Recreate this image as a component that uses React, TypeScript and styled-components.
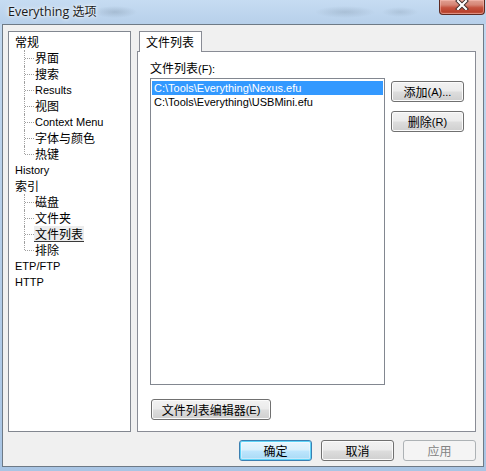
import React from 'react'
import styled, { createGlobalStyle, css } from 'styled-components'

const GlobalStyle = createGlobalStyle`
  html, body {
    margin: 0;
    padding: 0;
    background: #b9d1ea;
  }
  body {
    font-family: 'Liberation Sans', 'Noto Sans CJK SC', sans-serif;
  }
  * {
    box-sizing: border-box;
  }
`

const treeItems = [
  { label: '常规', level: 0 },
  { label: '界面', level: 1 },
  { label: '搜索', level: 1 },
  { label: 'Results', level: 1 },
  { label: '视图', level: 1 },
  { label: 'Context Menu', level: 1 },
  { label: '字体与颜色', level: 1 },
  { label: '热键', level: 1, last: true },
  { label: 'History', level: 0 },
  { label: '索引', level: 0 },
  { label: '磁盘', level: 1 },
  { label: '文件夹', level: 1 },
  { label: '文件列表', level: 1, selected: true },
  { label: '排除', level: 1, last: true },
  { label: 'ETP/FTP', level: 0 },
  { label: 'HTTP', level: 0 },
]

const files = ['C:\\Tools\\Everything\\Nexus.efu', 'C:\\Tools\\Everything\\USBMini.efu']

const isCjk = (s: string) => /[\u4e00-\u9fff]/.test(s)

const App = () => {
  return (
    <>
      <GlobalStyle />
      <Window>
        <TitleBar>
          <Title>
            Everything <Cjk>选项</Cjk>
          </Title>
          <CloseButton>
            <svg width="14" height="10" viewBox="0 0 14 10">
              <path d="M3 1 L11 9 M11 1 L3 9" stroke="#3a2a28" strokeWidth="4" strokeLinecap="square" />
              <path d="M3 1 L11 9 M11 1 L3 9" stroke="#ffffff" strokeWidth="2.2" strokeLinecap="square" />
            </svg>
          </CloseButton>
        </TitleBar>
        <Client>
          <MainRow>
            <Tree>
              {treeItems.map((item, i) => (
                <TreeRow key={i} $level={item.level} $last={!!item.last}>
                  <TreeLabel $cjk={isCjk(item.label)} $selected={!!item.selected}>
                    {item.label}
                  </TreeLabel>
                </TreeRow>
              ))}
            </Tree>
            <TabArea>
              <TabStrip>
                <Tab>文件列表</Tab>
              </TabStrip>
              <TabPanel>
                <FieldLabel>
                  文件列表<Latin>(F):</Latin>
                </FieldLabel>
                <ListRow>
                  <ListBox>
                    {files.map((f, i) => (
                      <ListItem key={f} $selected={i === 0}>
                        {f}
                      </ListItem>
                    ))}
                  </ListBox>
                  <SideButtons>
                    <Button>
                      添加<Latin>(A)...</Latin>
                    </Button>
                    <Button>
                      删除<Latin>(R)</Latin>
                    </Button>
                  </SideButtons>
                </ListRow>
                <EditorButton>
                  文件列表编辑器<Latin>(E)</Latin>
                </EditorButton>
              </TabPanel>
            </TabArea>
          </MainRow>
          <ButtonRow>
            <Button $variant="default">确定</Button>
            <Button>取消</Button>
            <Button $variant="disabled">应用</Button>
          </ButtonRow>
        </Client>
      </Window>
    </>
  )
}

const Window = styled.div`
  width: 486px;
  height: 471px;
  display: flex;
  flex-direction: column;
  padding: 0 2px 4px 2px;
  background: linear-gradient(to bottom, #c3d9f0 0%, #b8d0ea 40%, #a9c5e4 100%);
`
const TitleBar = styled.div`
  height: 24px;
  display: flex;
  align-items: flex-start;
  padding-left: 3px;
  margin: 0 -2px 0 -2px;
  padding-right: 1px;
  background:
    radial-gradient(ellipse 22px 6px at 115px 12px, rgba(120, 140, 160, 0.35), transparent),
    radial-gradient(ellipse 30px 6px at 345px 12px, rgba(120, 140, 160, 0.3), transparent),
    radial-gradient(ellipse 18px 5px at 400px 12px, rgba(120, 140, 160, 0.25), transparent),
    linear-gradient(to bottom, #c6dcf2, #b7d0ea);
`
const Title = styled.div`
  padding: 3px 0 0 5px;
  font-family: 'Open Sans', 'Noto Sans CJK SC', sans-serif;
  font-size: 12.5px;
  line-height: 16px;
  color: #1a1a1a;
  text-shadow: 0 0 6px rgba(255, 255, 255, 0.95), 0 0 3px rgba(255, 255, 255, 0.9);
`
const Cjk = styled.span`
  font-family: 'Noto Sans CJK SC', sans-serif;
  font-size: 12px;
`
const Latin = styled.span`
  font-family: 'Liberation Sans', sans-serif;
  font-size: 11px;
`
const CloseButton = styled.div`
  margin-left: auto;
  width: 46px;
  height: 15px;
  border: 1px solid #5e2a22;
  border-top: none;
  border-radius: 0 0 4px 4px;
  background: linear-gradient(to bottom, #e2a193 0%, #d58575 35%, #c5533f 55%, #b9412c 85%, #c86a55 100%);
  box-shadow: inset 0 0 0 1px rgba(255, 200, 190, 0.45);
  display: flex;
  justify-content: center;
  align-items: flex-start;
`
const Client = styled.div`
  flex: 1;
  display: flex;
  flex-direction: column;
  border: 1px solid #6e7a86;
  background: #f0f0f0;
  padding: 6px 7px 5px 5px;
`
const MainRow = styled.div`
  display: flex;
  gap: 6px;
  height: 401px;
`
const Tree = styled.div`
  width: 123px;
  height: 100%;
  background: #ffffff;
  border: 1px solid #828790;
  padding: 2px 0 0 6px;
`
const TreeRow = styled.div<{ $level: number; $last: boolean }>`
  position: relative;
  height: 16px;
  display: flex;
  align-items: center;
  white-space: nowrap;
  padding-left: ${(p) => p.$level * 20}px;
  ${(p) =>
    p.$level > 0 &&
    css`
      &::before {
        content: '';
        position: absolute;
        left: 9px;
        top: 0;
        height: ${p.$last ? '8px' : '16px'};
        border-left: 1px dotted #a0a0a0;
      }
      &::after {
        content: '';
        position: absolute;
        left: 10px;
        top: 8px;
        width: 9px;
        border-top: 1px dotted #a0a0a0;
      }
    `}
`
const TreeLabel = styled.span<{ $cjk: boolean; $selected: boolean }>`
  display: block;
  height: 16px;
  line-height: 16px;
  color: #000;
  font-family: ${(p) => (p.$cjk ? "'Noto Sans CJK SC', sans-serif" : "'Liberation Sans', sans-serif")};
  font-size: ${(p) => (p.$cjk ? '12px' : '11px')};
  ${(p) =>
    p.$selected &&
    css`
      background: #ededed;
      line-height: 15px;
      border-bottom: 1px solid #3a3a3a;
      padding: 0 1px;
      margin-left: -1px;
    `}
`
const TabArea = styled.div`
  width: 339px;
  display: flex;
  flex-direction: column;
`
const TabStrip = styled.div`
  height: 20px;
  display: flex;
  padding-left: 2px;
`
const Tab = styled.div`
  position: relative;
  z-index: 1;
  width: 63px;
  height: 21px;
  background: #ffffff;
  border: 1px solid #898c95;
  border-bottom: none;
  padding: 2px 0 0 6px;
  font-family: 'Noto Sans CJK SC', sans-serif;
  font-size: 12px;
  line-height: 16px;
  color: #000;
`
const TabPanel = styled.div`
  flex: 1;
  background: #ffffff;
  border: 1px solid #898c95;
  padding: 8px 10px 11px 12px;
  display: flex;
  flex-direction: column;
`
const FieldLabel = styled.div`
  height: 16px;
  line-height: 16px;
  margin-bottom: 2px;
  font-family: 'Noto Sans CJK SC', sans-serif;
  font-size: 12px;
  color: #000;
`
const ListRow = styled.div`
  display: flex;
  gap: 6px;
  height: 307px;
`
const ListBox = styled.div`
  width: 235px;
  height: 100%;
  border: 1px solid #828790;
  background: #ffffff;
  padding: 2px 1px;
`
const ListItem = styled.div<{ $selected: boolean }>`
  height: 14px;
  line-height: 14px;
  padding-left: 2px;
  font-family: 'Liberation Sans', sans-serif;
  font-size: 11px;
  white-space: nowrap;
  color: ${(p) => (p.$selected ? '#ffffff' : '#000000')};
  background: ${(p) => (p.$selected ? '#3399ff' : 'transparent')};
`
const SideButtons = styled.div`
  display: flex;
  flex-direction: column;
  gap: 9px;
  padding-top: 3px;
`
const Button = styled.div<{ $variant?: 'default' | 'disabled' }>`
  width: 73px;
  height: 21px;
  display: flex;
  align-items: center;
  justify-content: center;
  border: 1px solid #707070;
  border-radius: 3px;
  background: linear-gradient(to bottom, #f2f2f2 0%, #ebebeb 48%, #dddddd 52%, #cfcfcf 100%);
  box-shadow: inset 0 0 0 1px #fbfbfb;
  font-family: 'Noto Sans CJK SC', sans-serif;
  font-size: 12px;
  line-height: 16px;
  color: #000;
  ${(p) =>
    p.$variant === 'default' &&
    css`
      border-color: #3c7fb1;
      background: linear-gradient(to bottom, #eaf6fd 0%, #d9f0fc 48%, #bee6fd 52%, #a7d9f5 100%);
      box-shadow: inset 0 0 0 1px #5fd4f8, inset 0 0 0 2px rgba(255, 255, 255, 0.35);
    `}
  ${(p) =>
    p.$variant === 'disabled' &&
    css`
      border-color: #adb2b5;
      background: #f4f4f4;
      box-shadow: none;
      color: #838383;
    `}
`
const EditorButton = styled(Button)`
  width: 120px;
  margin: 14px 0 0 1px;
`
const ButtonRow = styled.div`
  display: flex;
  justify-content: flex-end;
  gap: 9px;
  margin-top: 8px;
`

export default App
